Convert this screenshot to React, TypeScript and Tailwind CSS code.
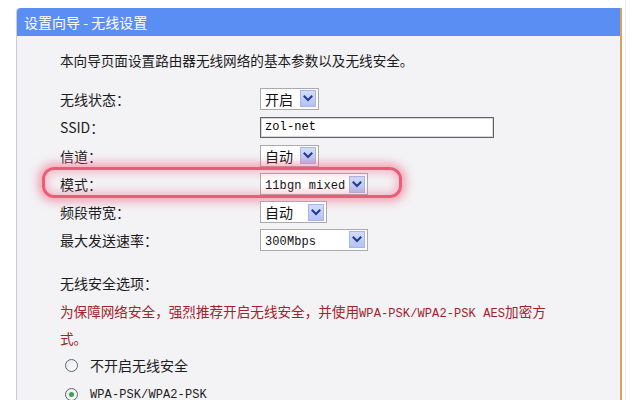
import React from "react";

const CJK = '"Noto Sans CJK SC", "Noto Sans", sans-serif';
const MONO = '"Liberation Mono", "Noto Sans CJK SC", monospace';

function Chevron() {
  return (
    <svg width="10" height="7" viewBox="0 0 10 7" fill="none">
      <path d="M1.5 1.5 L5 5 L8.5 1.5" stroke="#1f3a94" strokeWidth="2" strokeLinecap="square" />
    </svg>
  );
}

function Select({ width, children }: { width: string; children: React.ReactNode }) {
  return (
    <div className={`${width} h-[22px] flex items-center justify-between border border-[#a9a9b0] bg-white pl-[4px] pr-[2px]`}>
      <div className="text-[14px] leading-none text-[#111]">{children}</div>
      <div className="w-[16px] h-[17px] flex items-center justify-center bg-gradient-to-b from-[#d3dcfa] to-[#b3c2f0] border border-[#a6b6ea]">
        <Chevron />
      </div>
    </div>
  );
}

function Mono({ children }: { children: React.ReactNode }) {
  return (
    <span className="text-[12px] tracking-[0.1px]" style={{ fontFamily: MONO }}>
      {children}
    </span>
  );
}

function Row({ label, h, children, highlight }: { label: React.ReactNode; h: string; children: React.ReactNode; highlight?: boolean }) {
  return (
    <div className={`relative flex items-center ${h}`}>
      {highlight && (
        <span className="pointer-events-none absolute left-[-18px] top-[-3px] w-[360px] h-[31px] rounded-[12px] border-[3px] border-[#ef5a78] shadow-[0_0_8px_4px_rgba(240,90,120,0.5),inset_0_0_8px_3px_rgba(240,100,130,0.4)]" />
      )}
      <div className="w-[200px] text-[14px] text-[#1c1c1c] leading-none">{label}</div>
      {children}
    </div>
  );
}

function Radio({ checked }: { checked?: boolean }) {
  return (
    <span className="w-[13px] h-[13px] rounded-full border border-[#5d6676] bg-gradient-to-br from-[#e6e8ec] to-white flex items-center justify-center">
      {checked && <span className="w-[5px] h-[5px] rounded-full bg-[#3fa34d]" />}
    </span>
  );
}

export default function App() {
  return (
    <div className="w-[638px] h-[400px] bg-white overflow-hidden" style={{ fontFamily: CJK }}>
      <div className="flex">
        <div className="ml-[16px] mt-[8px] w-[606px] h-[420px] bg-[#f3f2f5] border-l border-[#c9cdd8] border-r-2 border-r-[#d8a261] rounded-tl-[4px] flex flex-col">
          <div className="h-[28px] bg-[#5b8ef2] rounded-tl-[4px] flex items-center pl-[7px] text-white text-[14px]">
            设置向导 - 无线设置
          </div>
          <div className="pl-[43px] pt-[14px]">
            <div className="h-[20px] flex items-center text-[13.6px] text-[#1c1c1c]">
              本向导页面设置路由器无线网络的基本参数以及无线安全。
            </div>
            <div className="mt-[14px] flex flex-col">
              <Row label="无线状态：" h="h-[29px]">
                <Select width="w-[59px]">开启</Select>
              </Row>
              <Row label="SSID：" h="h-[28px]">
                <div className="w-[234px] h-[21px] border border-[#5f6168] bg-white shadow-[inset_0_0_0_1px_#d8d8dc] flex items-center pl-[4px]">
                  <Mono>zol-net</Mono>
                </div>
              </Row>
              <Row label="信道：" h="h-[29px]">
                <Select width="w-[59px]">自动</Select>
              </Row>
              <Row label="模式：" h="h-[28px]" highlight>
                <Select width="w-[108px]">
                  <Mono>11bgn mixed</Mono>
                </Select>
              </Row>
              <Row label="频段带宽：" h="h-[28px]">
                <Select width="w-[67px]">自动</Select>
              </Row>
              <Row label="最大发送速率：" h="h-[27px]">
                <Select width="w-[108px]">
                  <Mono>300Mbps</Mono>
                </Select>
              </Row>
            </div>
            <div className="mt-[20px] h-[20px] flex items-center text-[14px] text-[#1c1c1c]">无线安全选项：</div>
            <div className="mt-[6px] text-[13.6px] leading-[24px] text-[#a3222c]">
              为保障网络安全，强烈推荐开启无线安全，并使用<Mono>WPA-PSK/WPA2-PSK AES</Mono>加密方
              <br />
              式。
            </div>
            <div className="mt-[1px] h-[29px] flex items-center pl-[5px] gap-[12px] text-[14px] text-[#1c1c1c]">
              <Radio />
              <span>不开启无线安全</span>
            </div>
            <div className="h-[29px] flex items-center pl-[5px] gap-[12px] text-[14px] text-[#1c1c1c]">
              <Radio checked />
              <Mono>WPA-PSK/WPA2-PSK</Mono>
            </div>
          </div>
        </div>
        <div className="ml-[3px] w-px h-[400px] bg-[#f3ede8]" />
      </div>
    </div>
  );
}
